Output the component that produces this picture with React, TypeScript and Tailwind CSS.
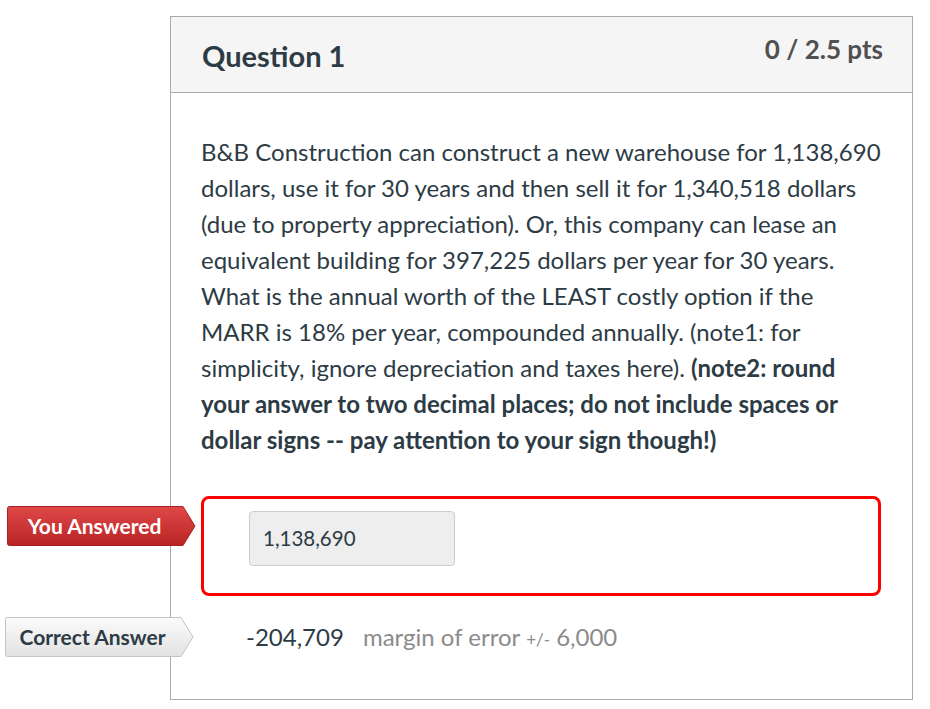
const Tag = ({ label, tone }: { label: string; tone: "red" | "gray" }) => {
  const red = tone === "red";
  return (
    <div className="relative flex items-center h-[40px] w-[190px]">
      <svg width="190" height="42" viewBox="0 0 190 42" className="absolute left-0 top-[-1px]">
        <defs>
          <linearGradient id={`g-${tone}`} x1="0" y1="0" x2="0" y2="1">
            <stop offset="0" stopColor={red ? "#e04848" : "#fbfbfb"} />
            <stop offset="1" stopColor={red ? "#b82424" : "#e2e2e2"} />
          </linearGradient>
        </defs>
        <path
          d="M3.5 1.5 H177 L189 21 L177 40.5 H3.5 Q1.5 40.5 1.5 38.5 V3.5 Q1.5 1.5 3.5 1.5 Z"
          fill={`url(#g-${tone})`}
          stroke={red ? "#a82020" : "#c4c4c4"}
          strokeWidth="1"
        />
      </svg>
      <span
        className={`relative w-[177px] text-center text-[21px] font-bold ${
          red ? "text-white" : "text-[#2d3b45]"
        }`}
      >
        {label}
      </span>
    </div>
  );
};

export default function App() {
  return (
    <div className="min-h-[709px] bg-white pt-[16px] pl-[170px] font-['Lato','Noto_Sans',sans-serif] text-[#2d3b45]">
      <div className="relative w-[743px] h-[684px] border border-[#aaaaaa]">
        <div className="flex items-start justify-between h-[76px] bg-[#f5f5f5] border-b border-[#aaaaaa] pl-[31px] pr-[29px]">
          <h2 className="mt-[21px] text-[29px] font-bold leading-[36px]">Question 1</h2>
          <span className="mt-[17px] text-[26px] font-bold leading-[30px] text-[#505050]">0 / 2.5 pts</span>
        </div>

        <div className="pt-[41px] pl-[30px]">
          <p className="w-[684px] text-[24px] leading-[36px]">
            B&amp;B Construction can construct a new warehouse for 1,138,690 dollars, use it for 30 years and
            then sell it for 1,340,518 dollars (due to property appreciation). Or, this company can lease an
            equivalent building for 397,225 dollars per year for 30 years. What is the annual worth of the
            LEAST costly option if the MARR is 18% per year, compounded annually. (note1: for simplicity,
            ignore depreciation and taxes here).{" "}
            <strong>
              (note2: round your answer to two decimal places; do not include spaces or dollar signs -- pay
              attention to your sign though!)
            </strong>
          </p>

          <div className="relative mt-[38px] w-[680px]">
            <div className="absolute left-[-195px] top-[10px]">
              <Tag label="You Answered" tone="red" />
            </div>
            <div className="h-[100px] rounded-[8px] border-[3px] border-[#ff0000] pl-[45px] pt-[12px]">
              <div className="flex items-center w-[206px] h-[55px] rounded-[4px] border border-[#cccccc] bg-[#eeeeee] pl-[13px] text-[20.5px] text-[#2d3b45]">
                1,138,690
              </div>
            </div>
          </div>

          <div className="relative mt-[21px] flex items-baseline h-[40px] pl-[45px]">
            <div className="absolute left-[-197px] top-[0px]">
              <Tag label="Correct Answer" tone="gray" />
            </div>
            <span className="text-[24px] leading-[40px]">-204,709</span>
            <span className="ml-[19px] text-[24px] leading-[40px] text-[#8b8b8b]">margin of error</span>
            <span className="ml-[6px] text-[17px] text-[#8b8b8b]">+/-</span>
            <span className="ml-[6px] text-[24px] leading-[40px] text-[#8b8b8b]">6,000</span>
          </div>
        </div>
      </div>
    </div>
  );
}
